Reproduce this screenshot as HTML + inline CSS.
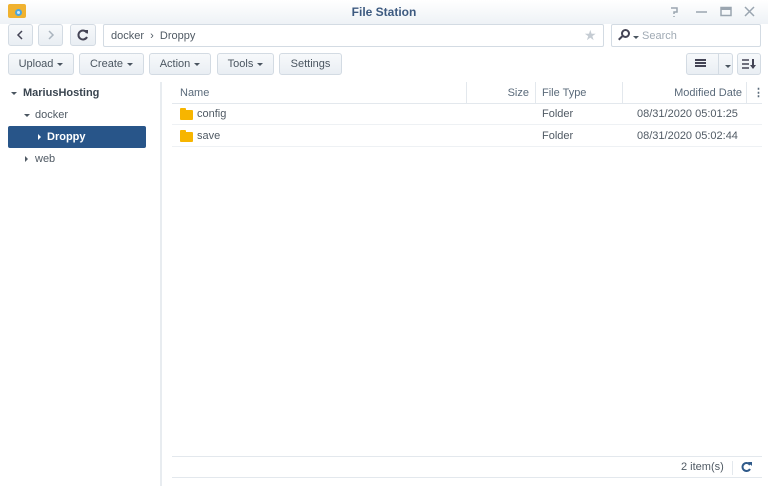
<!DOCTYPE html>
<html><head><style>
*{box-sizing:border-box;margin:0;padding:0}
body{width:768px;height:486px;background:#fff;font-family:"Liberation Sans",sans-serif;font-size:11px;color:#505a64;position:relative;overflow:hidden}
.a{position:absolute}
.btn{position:absolute;border:1px solid #d3dbe3;border-radius:3px;background:linear-gradient(#f7f9fb,#e9eef3);color:#4a5560;font-size:11px;text-align:center;line-height:21px}
.cd{display:inline-block;width:0;height:0;border-left:3px solid transparent;border-right:3px solid transparent;border-top:3px solid #4a5560;vertical-align:middle;margin-left:4px}
.hdr{position:absolute;top:83px;height:21px;line-height:21px;color:#5a6a7a;font-size:11px}
.row{position:absolute;left:172px;width:590px;height:22px;border-bottom:1px solid #eef1f4;line-height:23px}
.fold{position:absolute;left:8px;top:7px;width:13px;height:10px;background:#f7b500;border-radius:1px}
.fold:before{content:"";position:absolute;left:0;top:-2px;width:6px;height:3px;background:#f7b500;border-radius:1px 1px 0 0}
</style></head><body>
<div class="a" style="left:0;top:0;width:768px;height:24px;background:linear-gradient(#fff,#eef2f6)"></div>
<div class="a" style="left:8px;top:4px;width:18px;height:14px;background:#f0b230;border-radius:2px"></div>
<div class="a" style="left:15px;top:9px;width:7px;height:7px;border:2px solid #4aa6e0;border-radius:50%;background:#cde8f8"></div>
<div class="a" style="left:0;top:5px;width:768px;text-align:center;font-weight:bold;font-size:12px;color:#3d5a80">File Station</div>
<svg class="a" style="left:668px;top:5px" width="90" height="14" viewBox="0 0 90 14" fill="none" stroke="#9aa5b0" stroke-width="1.5">
<path d="M3 3h6v4h-3v2M6 11v1"/>
<path d="M28 7h11"/>
<rect x="53" y="2.5" width="10" height="8"/><path d="M53 4h10" stroke-width="2"/>
<path d="M77 2l9 9M86 2l-9 9"/>
</svg>

<div class="btn" style="left:8px;top:24px;width:25px;height:22px"></div>
<svg class="a" style="left:8px;top:24px" width="25" height="22"><path d="M14 7l-4 4 4 4" fill="none" stroke="#445" stroke-width="1.5"/></svg>
<div class="btn" style="left:38px;top:24px;width:25px;height:22px"></div>
<svg class="a" style="left:38px;top:24px" width="25" height="22"><path d="M11 7l4 4-4 4" fill="none" stroke="#aab4be" stroke-width="1.5"/></svg>
<div class="btn" style="left:70px;top:24px;width:26px;height:22px"></div>
<svg class="a" style="left:70px;top:24px" width="26" height="22"><path d="M17 9a4.5 4.5 0 1 0 0 4" fill="none" stroke="#445" stroke-width="2"/><path d="M14 6l4 0 0 4z" fill="#445"/></svg>
<div class="a" style="left:103px;top:24px;width:501px;height:23px;border:1px solid #d3dbe3;border-radius:2px;padding-left:7px;line-height:22px;color:#505a64">docker &nbsp;›&nbsp; Droppy</div>
<div class="a" style="left:584px;top:27px;color:#c5ccd3;font-size:14px">★</div>
<div class="a" style="left:611px;top:24px;width:150px;height:23px;border:1px solid #d3dbe3;border-radius:2px;line-height:22px;padding-left:30px;color:#a0aab4">Search</div>
<div class="a" style="left:621px;top:29px;width:9px;height:9px;border:2px solid #445;border-radius:50%"></div>
<div class="a" style="left:618px;top:37px;width:5px;height:2px;background:#445;transform:rotate(-45deg)"></div>
<div class="a" style="left:633px;top:31px"><span class="cd" style="margin:0"></span></div>

<div class="btn" style="left:8px;top:53px;width:66px;height:22px">Upload<span class="cd"></span></div>
<div class="btn" style="left:79px;top:53px;width:65px;height:22px">Create<span class="cd"></span></div>
<div class="btn" style="left:149px;top:53px;width:62px;height:22px">Action<span class="cd"></span></div>
<div class="btn" style="left:217px;top:53px;width:57px;height:22px">Tools<span class="cd"></span></div>
<div class="btn" style="left:279px;top:53px;width:63px;height:22px">Settings</div>
<div class="btn" style="left:686px;top:53px;width:47px;height:22px"></div>
<div class="a" style="left:695px;top:59px;width:11px;height:8px;border-top:2px solid #445;border-bottom:2px solid #445"></div>
<div class="a" style="left:695px;top:62px;width:11px;height:2px;background:#445"></div>
<div class="a" style="left:718px;top:53px;width:1px;height:22px;background:#d3dbe3"></div>
<div class="a" style="left:721px;top:60px"><span class="cd"></span></div>
<div class="btn" style="left:737px;top:53px;width:24px;height:22px"></div>
<svg class="a" style="left:737px;top:53px" width="24" height="22"><path d="M5 7h7M5 11h7M5 15h7" stroke="#445" stroke-width="1.5"/><path d="M16 6v9" stroke="#445" stroke-width="2"/><path d="M13 12l3 4 3-4z" fill="#445"/></svg>

<div class="a" style="left:160px;top:82px;width:2px;height:404px;background:#e8ecf0"></div>
<div class="a" style="left:11px;top:87px;font-weight:bold;color:#3a4550"><span class="cd" style="margin:0 6px 0 0"></span>MariusHosting</div>
<div class="a" style="left:24px;top:109px;color:#505a64"><span class="cd" style="margin:0 5px 0 0"></span>docker</div>
<div class="a" style="left:8px;top:126px;width:138px;height:22px;background:#285589;border-radius:2px;color:#fff;font-weight:bold;line-height:22px;padding-left:39px">Droppy</div>
<div class="a" style="left:38px;top:134px;border-top:3px solid transparent;border-bottom:3px solid transparent;border-left:3px solid #fff"></div>
<div class="a" style="left:25px;top:156px;border-top:3px solid transparent;border-bottom:3px solid transparent;border-left:3px solid #505a64"></div>
<div class="a" style="left:35px;top:153px">web</div>

<div class="a" style="left:172px;top:82px;width:590px;height:22px;border-bottom:1px solid #e3e8ed"></div>
<div class="hdr" style="left:180px">Name</div>
<div class="a" style="left:466px;top:82px;width:1px;height:21px;background:#e3e8ed"></div>
<div class="hdr" style="left:466px;width:63px;text-align:right">Size</div>
<div class="a" style="left:535px;top:82px;width:1px;height:21px;background:#e3e8ed"></div>
<div class="hdr" style="left:542px">File Type</div>
<div class="a" style="left:622px;top:82px;width:1px;height:21px;background:#e3e8ed"></div>
<div class="hdr" style="left:622px;width:120px;text-align:right">Modified Date</div>
<div class="a" style="left:746px;top:82px;width:1px;height:21px;background:#e3e8ed"></div>
<div class="hdr" style="left:753px;font-weight:bold">⋮</div>

<div class="row" style="top:103px"><div class="fold"></div><span class="a" style="left:25px">config</span><span class="a" style="left:370px">Folder</span><span class="a" style="left:465px">08/31/2020 05:01:25</span></div>
<div class="row" style="top:125px"><div class="fold"></div><span class="a" style="left:25px">save</span><span class="a" style="left:370px">Folder</span><span class="a" style="left:465px">08/31/2020 05:02:44</span></div>

<div class="a" style="left:172px;top:456px;width:590px;height:1px;background:#e3e8ed"></div>
<div class="a" style="left:172px;top:477px;width:590px;height:1px;background:#e3e8ed"></div>
<div class="a" style="left:681px;top:461px;color:#505a64">2 item(s)</div>
<div class="a" style="left:732px;top:461px;width:1px;height:14px;background:#e3e8ed"></div>
<svg class="a" style="left:740px;top:460px" width="14" height="14"><path d="M10 5a4 4 0 1 0 0 4" fill="none" stroke="#2f5a8a" stroke-width="2"/><path d="M8 2h4v4z" fill="#2f5a8a"/></svg>
</body></html>
